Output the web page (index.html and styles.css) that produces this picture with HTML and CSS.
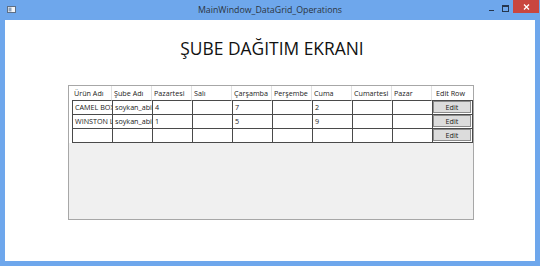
FILE: index.html
```html
<!DOCTYPE html>
<html lang="tr">
<head>
    <meta charset="UTF-8">
    <title>MainWindow_DataGrid_Operations</title>
    <link rel="stylesheet" href="styles.css">
</head>
<body>
    <div class="window">
        <div class="titlebar">
            <svg class="app-icon" width="9" height="7" viewBox="0 0 9 7">
                <rect x="0.5" y="0.5" width="8" height="6" fill="#f4f6f8" stroke="#5d6f86"/>
                <rect x="1.5" y="1.5" width="3" height="4" fill="#8da2bb"/>
            </svg>
            <div class="title">MainWindow_DataGrid_Operations</div>
            <div class="controls">
                <span class="btn-min"></span>
                <span class="btn-max"></span>
                <span class="btn-close">
                    <svg width="7" height="6" viewBox="0 0 7 6">
                        <path d="M1 0.5 L6 5.5 M6 0.5 L1 5.5" stroke="#fff" stroke-width="1.3"/>
                    </svg>
                </span>
            </div>
        </div>
        <div class="client">
            <h1 class="heading">ŞUBE DAĞITIM EKRANI</h1>
            <div class="grid">
                <div class="grid-header">
                    <div class="hcell">Ürün Adı</div>
                    <div class="hcell">Şube Adı</div>
                    <div class="hcell">Pazartesi</div>
                    <div class="hcell">Salı</div>
                    <div class="hcell">Çarşamba</div>
                    <div class="hcell">Perşembe</div>
                    <div class="hcell">Cuma</div>
                    <div class="hcell">Cumartesi</div>
                    <div class="hcell">Pazar</div>
                    <div class="hcell last">Edit Row</div>
                </div>
                <div class="grid-row">
                    <div class="cell">CAMEL BOX</div>
                    <div class="cell">soykan_abicim</div>
                    <div class="cell">4</div>
                    <div class="cell"></div>
                    <div class="cell">7</div>
                    <div class="cell"></div>
                    <div class="cell">2</div>
                    <div class="cell"></div>
                    <div class="cell"></div>
                    <div class="cell edit"><button>Edit</button></div>
                </div>
                <div class="grid-row">
                    <div class="cell">WINSTON LIGHT</div>
                    <div class="cell">soykan_abicim</div>
                    <div class="cell">1</div>
                    <div class="cell"></div>
                    <div class="cell">5</div>
                    <div class="cell"></div>
                    <div class="cell">9</div>
                    <div class="cell"></div>
                    <div class="cell"></div>
                    <div class="cell edit"><button>Edit</button></div>
                </div>
                <div class="grid-row">
                    <div class="cell"></div>
                    <div class="cell"></div>
                    <div class="cell"></div>
                    <div class="cell"></div>
                    <div class="cell"></div>
                    <div class="cell"></div>
                    <div class="cell"></div>
                    <div class="cell"></div>
                    <div class="cell"></div>
                    <div class="cell edit"><button>Edit</button></div>
                </div>
            </div>
        </div>
    </div>
</body>
</html>
```

FILE: styles.css
```css
body {
    margin: 0;
    padding: 0;
    font-family: "Open Sans", "Noto Sans", sans-serif;
}
.window {
    width: 540px;
    height: 266px;
    box-sizing: border-box;
    background-color: #6ea7ec;
    padding: 0 5px 5px;
    display: flex;
    flex-direction: column;
}
.titlebar {
    height: 20px;
    display: flex;
    align-items: center;
    position: relative;
}
.app-icon {
    margin-left: 2px;
    margin-top: -1px;
}
.title {
    position: absolute;
    left: -5px;
    right: -5px;
    text-align: center;
    font-size: 8.8px;
    color: #2b3440;
    top: 5px;
    line-height: 11px;
}
.controls {
    margin-left: auto;
    margin-right: -4px;
    display: flex;
    align-self: flex-start;
    align-items: flex-start;
}
.btn-min {
    width: 5px;
    height: 1px;
    background-color: #26364d;
    margin-top: 10px;
    margin-right: 8px;
}
.btn-max {
    width: 5px;
    height: 4px;
    border: 1px solid #26364d;
    border-top-width: 2px;
    margin-top: 5px;
    margin-right: 4px;
}
.btn-close {
    width: 26px;
    height: 13px;
    background-color: #c9463f;
    display: flex;
    align-items: center;
    justify-content: center;
}
.client {
    flex: 1;
    background-color: #fff;
    display: flex;
    flex-direction: column;
}
.heading {
    margin: 19px 0 0 4px;
    font-size: 17.4px;
    line-height: 18px;
    font-weight: normal;
    text-align: center;
    color: #111;
}
.grid {
    margin: 28px 0 0 63px;
    width: 406px;
    height: 135px;
    box-sizing: border-box;
    border: 1px solid #a7a7a7;
    background-color: #f0f0f0;
    font-size: 7.2px;
    color: #1a1a1a;
}
.grid-header,
.grid-row {
    display: flex;
    padding-left: 3px;
    background-color: #fff;
}
.grid-header {
    height: 15px;
}
.grid-row {
    height: 14px;
}
.hcell {
    width: 40px;
    box-sizing: border-box;
    padding-left: 2px;
    border-right: 1px solid #e2e2e2;
    border-bottom: 1px solid #4a4a4a;
    line-height: 14px;
    white-space: nowrap;
    overflow: hidden;
}
.hcell.last {
    width: 41px;
    padding-left: 4px;
    border-right: none;
}
.cell {
    width: 40px;
    box-sizing: border-box;
    border-left: 1px solid #4a4a4a;
    border-bottom: 1px solid #4a4a4a;
    padding-left: 2px;
    line-height: 13px;
    white-space: nowrap;
    overflow: hidden;
}
.cell.edit {
    width: 41px;
    padding: 0 1px 0 0;
    border-right: 1px solid #4a4a4a;
}
.cell.edit button {
    display: block;
    width: 38px;
    height: 12px;
    margin: 0;
    padding: 0;
    border: 1px solid #8c8c8c;
    background-color: #dcdcdc;
    font-family: "Open Sans", "Noto Sans", sans-serif;
    font-size: 7.2px;
    line-height: 10px;
    color: #1a1a1a;
    text-align: center;
}
```
